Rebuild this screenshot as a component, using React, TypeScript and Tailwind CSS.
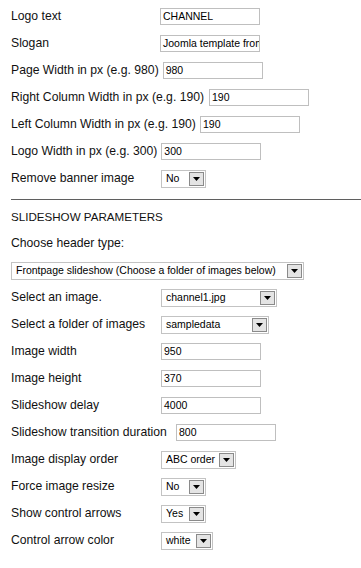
import React from "react";

const font = { fontFamily: '"Liberation Sans", Arial, sans-serif' };

function Input({ value, w = 100 }: { value: string; w?: number }) {
  return (
    <div
      className="h-[17px] border border-[#bfbfbf] bg-white flex items-center pl-[2px] overflow-hidden whitespace-nowrap text-[10.5px] text-black"
      style={{ width: w }}
    >
      {value}
    </div>
  );
}

function Select({ value, w }: { value: string; w: number }) {
  return (
    <div
      className="h-[18px] border border-[#c3c3c3] bg-white flex items-center justify-between pl-[4px] pr-[1px] text-[10.5px] text-black whitespace-nowrap"
      style={{ width: w }}
    >
      <span>{value}</span>
      <div className="w-[15px] h-[14px] border border-[#8a8a8a] bg-[#e4e4e4] flex items-center justify-center">
        <svg width="7" height="4" viewBox="0 0 7 4">
          <path d="M0 0H7L3.5 4Z" fill="#000" />
        </svg>
      </div>
    </div>
  );
}

function Row({ label, children, minW = 146 }: { label: string; children?: React.ReactNode; minW?: number }) {
  return (
    <div className="h-[27px] flex items-center gap-[4px]">
      <span className="text-[12.2px] text-[#111] whitespace-nowrap" style={{ minWidth: minW }}>
        {label}
      </span>
      {children}
    </div>
  );
}

export default function App() {
  return (
    <div className="w-[361px] h-[568px] bg-white overflow-hidden pt-[3px] pl-[11px]" style={font}>
      <Row label="Logo text" minW={145}><Input value="CHANNEL" /></Row>
      <Row label="Slogan" minW={145}><Input value="Joomla template from" /></Row>
      <Row label="Page Width in px (e.g. 980)" minW={147}><Input value="980" /></Row>
      <Row label="Right Column Width in px (e.g. 190)" minW={194}><Input value="190" /></Row>
      <Row label="Left Column Width in px (e.g. 190)" minW={185}><Input value="190" /></Row>
      <Row label="Logo Width in px (e.g. 300)"><Input value="300" /></Row>
      <Row label="Remove banner image"><Select value="No" w={45} /></Row>
      <div className="mt-[7px] h-px bg-[#5f5f5f]" />
      <div className="mt-[4px] h-[26px] flex items-center text-[11.6px] text-[#111]">SLIDESHOW PARAMETERS</div>
      <Row label="Choose header type:" />
      <div className="h-[27px] flex items-center">
        <Select value="Frontpage slideshow (Choose a folder of images below)" w={293} />
      </div>
      <Row label="Select an image."><Select value="channel1.jpg" w={116} /></Row>
      <Row label="Select a folder of images"><Select value="sampledata" w={108} /></Row>
      <Row label="Image width"><Input value="950" /></Row>
      <Row label="Image height"><Input value="370" /></Row>
      <Row label="Slideshow delay"><Input value="4000" /></Row>
      <Row label="Slideshow transition duration" minW={161}><Input value="800" /></Row>
      <Row label="Image display order"><Select value="ABC order" w={75} /></Row>
      <Row label="Force image resize"><Select value="No" w={45} /></Row>
      <Row label="Show control arrows"><Select value="Yes" w={45} /></Row>
      <Row label="Control arrow color"><Select value="white" w={52} /></Row>
    </div>
  );
}
